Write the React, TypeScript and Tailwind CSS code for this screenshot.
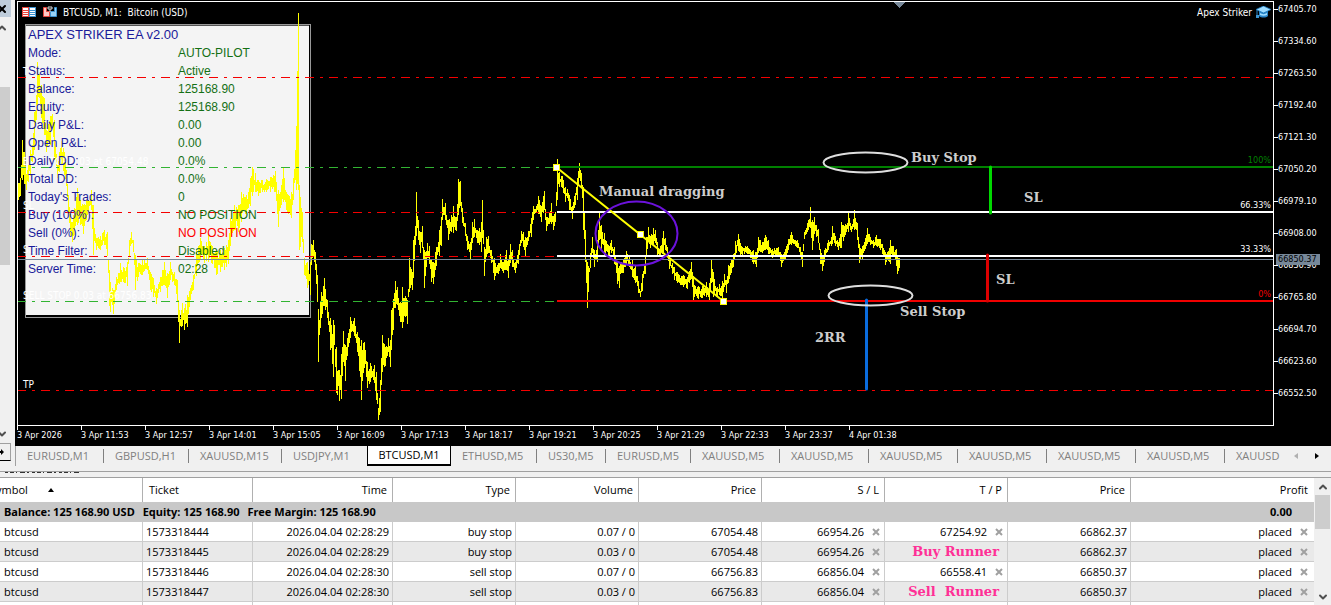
import React from 'react';
import { ChevronDown, ChevronUp, X } from 'lucide-react';

// [x, high, low] in plot coordinates
const priceRange: [number, number, number][] = [
  [18, 183, 200], [20, 178, 196], [22, 140, 180], [24, 152, 184], [26, 174, 190], [28, 165, 182], [30, 150, 176],
  [32, 145, 162], [34, 112, 150], [36, 95, 120], [37, 62, 105], [39, 74, 98], [41, 85, 118], [44, 98, 135],
  [46, 130, 152], [50, 116, 145], [52, 114, 125], [54, 120, 160], [57, 165, 178], [59, 152, 172], [61, 141, 165],
  [64, 152, 175], [66, 170, 186], [68, 195, 214], [70, 214, 236], [72, 222, 242], [74, 208, 235], [77, 188, 225],
  [80, 200, 225], [83, 205, 234], [86, 200, 220], [91, 190, 210], [93, 205, 255], [96, 238, 250], [100, 236, 250],
  [104, 230, 245], [107, 232, 256], [109, 270, 306], [110, 282, 312], [113, 290, 314], [116, 277, 290],
  [120, 263, 282], [124, 268, 283], [127, 262, 286], [129, 240, 256], [131, 232, 244], [133, 240, 252],
  [135, 255, 290], [138, 263, 277], [142, 260, 275], [147, 258, 270], [150, 272, 290], [153, 278, 297],
  [156, 288, 304], [160, 277, 292], [164, 262, 285], [167, 273, 298], [170, 262, 280], [174, 272, 285],
  [177, 280, 302], [178, 300, 322], [179, 310, 343], [182, 303, 326], [184, 308, 330], [187, 295, 327],
  [190, 288, 300], [193, 275, 290], [196, 250, 276], [200, 238, 260], [204, 246, 263], [208, 234, 262],
  [212, 246, 264], [216, 250, 275], [220, 250, 272], [224, 248, 270], [228, 240, 264], [230, 218, 246],
  [234, 205, 230], [238, 205, 232], [241, 192, 222], [246, 195, 215], [250, 178, 206], [252, 167, 196],
  [255, 173, 192], [258, 180, 196], [262, 180, 192], [266, 179, 192], [270, 177, 192], [275, 171, 192],
  [278, 190, 227], [280, 192, 208], [283, 167, 202], [287, 194, 213], [291, 192, 218], [293, 178, 200],
  [296, 126, 190], [298, 13, 190], [299, 185, 250], [302, 212, 242], [304, 258, 275], [307, 262, 288],
  [310, 262, 295], [311, 244, 265], [313, 240, 256], [315, 252, 270], [317, 275, 302], [318, 309, 362],
  [320, 302, 328], [321, 292, 318], [324, 278, 306], [327, 300, 318], [330, 318, 350], [333, 320, 377],
  [334, 325, 345], [336, 347, 393], [339, 370, 401], [341, 354, 399], [343, 331, 362], [345, 345, 381],
  [347, 338, 356], [350, 317, 338], [354, 318, 336], [357, 332, 352], [359, 338, 371], [361, 340, 400],
  [364, 342, 368], [367, 362, 388], [370, 363, 382], [374, 365, 383], [376, 372, 400], [378, 408, 420],
  [380, 380, 412], [382, 335, 372], [385, 347, 366], [388, 338, 352], [390, 340, 367], [391, 310, 350],
  [393, 299, 330], [395, 281, 308], [397, 287, 305], [400, 302, 322], [402, 287, 328], [405, 296, 317],
  [407, 300, 324], [409, 258, 292], [412, 272, 290], [413, 240, 278], [415, 226, 245], [416, 192, 236],
  [418, 220, 240], [420, 232, 253], [422, 226, 248], [424, 250, 288], [427, 243, 258], [429, 246, 264],
  [431, 260, 282], [433, 262, 284], [436, 247, 266], [439, 230, 256], [441, 217, 246], [442, 199, 220],
  [445, 203, 220], [448, 220, 240], [451, 215, 232], [453, 206, 233], [456, 217, 231], [458, 179, 215],
  [460, 181, 206], [462, 208, 223], [465, 223, 236], [467, 236, 250], [470, 242, 259], [472, 222, 243],
  [474, 219, 237], [477, 230, 243], [479, 228, 245], [481, 222, 252], [482, 200, 238], [484, 247, 276],
  [486, 237, 257], [488, 236, 253], [491, 250, 263], [494, 258, 280], [498, 263, 274], [500, 254, 268],
  [503, 262, 273], [506, 250, 270], [508, 260, 278], [510, 244, 263], [512, 250, 267], [515, 262, 273],
  [518, 250, 264], [521, 231, 243], [523, 232, 247], [525, 237, 256], [528, 231, 241], [531, 218, 237],
  [533, 206, 220], [536, 206, 212], [538, 196, 214], [541, 206, 222], [544, 191, 210], [546, 217, 231],
  [549, 212, 224], [551, 203, 224], [553, 216, 230], [555, 212, 222], [557, 159, 200], [559, 172, 187],
  [562, 176, 188], [565, 187, 202], [567, 189, 198], [569, 195, 210], [572, 206, 219], [574, 196, 208],
  [577, 178, 200], [579, 163, 178], [581, 173, 187], [583, 187, 230], [585, 230, 262], [587, 262, 308],
  [588, 266, 292], [590, 253, 268], [592, 237, 253], [594, 250, 267], [597, 240, 262], [599, 212, 240],
  [601, 225, 250], [604, 233, 256], [608, 245, 257], [611, 240, 253], [614, 247, 264], [617, 262, 284],
  [619, 266, 288], [621, 262, 273], [623, 259, 273], [626, 251, 264], [629, 257, 267], [632, 260, 277],
  [635, 266, 283], [638, 281, 293], [640, 291, 297], [642, 274, 291], [645, 256, 274], [646, 237, 257],
  [648, 227, 242], [650, 236, 248], [653, 228, 244], [655, 230, 243], [657, 242, 255], [660, 246, 257],
  [663, 231, 253], [665, 238, 250], [667, 247, 257], [669, 256, 269], [672, 263, 274], [674, 267, 280],
  [677, 272, 283], [683, 275, 287], [687, 277, 289], [691, 262, 279], [693, 276, 300], [698, 286, 299],
  [702, 286, 298], [706, 282, 297], [709, 283, 300], [711, 260, 283], [713, 272, 297], [716, 288, 297],
  [719, 284, 295], [722, 281, 301], [724, 274, 287], [726, 280, 293], [728, 265, 283], [731, 259, 273],
  [733, 254, 267], [735, 241, 257], [738, 234, 251], [740, 243, 256], [747, 246, 254], [753, 250, 264],
  [756, 252, 267], [758, 237, 253], [762, 242, 253], [765, 235, 250], [768, 240, 254], [772, 249, 258],
  [778, 247, 257], [781, 254, 267], [785, 249, 260], [788, 239, 250], [791, 232, 245], [797, 240, 248],
  [800, 247, 256], [802, 252, 267], [804, 232, 239], [807, 223, 232], [810, 207, 228], [812, 220, 250],
  [814, 217, 234], [818, 229, 243], [820, 249, 264], [822, 256, 271], [824, 250, 262], [828, 240, 250],
  [831, 237, 246], [832, 226, 244], [835, 236, 246], [838, 242, 250], [841, 222, 248], [845, 224, 235],
  [848, 213, 232], [851, 226, 232], [854, 210, 230], [857, 223, 240], [859, 244, 263], [862, 246, 259],
  [865, 238, 249], [867, 228, 244], [870, 237, 245], [873, 240, 248], [876, 235, 246], [880, 239, 250],
  [882, 244, 254], [885, 252, 265], [888, 251, 261], [890, 240, 264], [893, 246, 256], [896, 249, 266],
  [897, 257, 274], [900, 258, 270],
];

function noise(n: number) {
  const v = Math.sin(n * 12.9898) * 43758.5453;
  return v - Math.floor(v);
}

function buildBars() {
  let d = '';
  for (let i = 0; i < priceRange.length - 1; i++) {
    const [x0, h0, l0] = priceRange[i];
    const [x1, h1, l1] = priceRange[i + 1];
    for (let x = x0; x < x1; x++) {
      const t = (x - x0) / (x1 - x0);
      const high = h0 + (h1 - h0) * t;
      const low = l0 + (l1 - l0) * t;
      const cut = x === x0 ? 0 : (low - high) * 0.4;
      const top = Math.round(high + cut * noise(x));
      const bottom = Math.round(low - cut * noise(x + 500));
      d += `M${x + 0.5} ${top}V${bottom}`;
    }
  }
  return d;
}

const bars = buildBars();

const panelRows = [
  { label: 'Mode:', value: 'AUTO-PILOT' },
  { label: 'Status:', value: 'Active' },
  { label: 'Balance:', value: '125168.90' },
  { label: 'Equity:', value: '125168.90' },
  { label: 'Daily P&L:', value: '0.00' },
  { label: 'Open P&L:', value: '0.00' },
  { label: 'Daily DD:', value: '0.0%' },
  { label: 'Total DD:', value: '0.0%' },
  { label: "Today's Trades:", value: '0' },
  { label: 'Buy (100%):', value: 'NO POSITION' },
  { label: 'Sell (0%):', value: 'NO POSITION', alert: true },
  { label: 'Time Filter:', value: 'Disabled' },
  { label: 'Server Time:', value: '02:28' },
];

const prices = [
  '67405.70', '67334.60', '67263.50', '67192.40', '67121.30', '67050.20', '66979.10',
  '66908.00', '66836.90', '66765.80', '66694.70', '66623.60', '66552.50',
];

const times = [
  '3 Apr 2026', '3 Apr 11:53', '3 Apr 12:57', '3 Apr 14:01', '3 Apr 15:05', '3 Apr 16:09', '3 Apr 17:13',
  '3 Apr 18:17', '3 Apr 19:21', '3 Apr 20:25', '3 Apr 21:29', '3 Apr 22:33', '3 Apr 23:37', '4 Apr 01:38',
];

const orderLabels = [
  { text: 'TP', place: 'top-[62px]' },
  { text: 'BUY STOP 0.03 at 67054.48', place: 'top-[152px]' },
  { text: 'SL', place: 'top-[196px]' },
  { text: 'SL', place: 'top-[240px]' },
  { text: 'SELL STOP 0.03 at 66756.83', place: 'top-[286px]' },
  { text: 'TP', place: 'top-[375px]' },
];

const levelLabels = [
  { text: '100%', place: 'top-[150px] text-[#008000]' },
  { text: '66.33%', place: 'top-[195px] text-white' },
  { text: '33.33%', place: 'top-[239px] text-white' },
  { text: '0%', place: 'top-[284px] text-[#f00000]' },
];

const notes = [
  { text: 'Manual dragging', place: 'left-[581px] top-[180px]' },
  { text: 'Buy Stop', place: 'left-[893px] top-[146px]' },
  { text: 'SL', place: 'left-[1006px] top-[186px]' },
  { text: 'SL', place: 'left-[978px] top-[268px]' },
  { text: 'Sell Stop', place: 'left-[882px] top-[300px]' },
  { text: '2RR', place: 'left-[797px] top-[326px]' },
];

const tabs = [
  { name: 'EURUSD,M1', width: 'w-[88px]' },
  { name: 'GBPUSD,H1', width: 'w-[85px]' },
  { name: 'XAUUSD,M15', width: 'w-[93px]' },
  { name: 'USDJPY,M1', width: 'w-[85px]' },
  { name: 'BTCUSD,M1', width: 'w-[84px]', active: true },
  { name: 'ETHUSD,M5', width: 'w-[86px]' },
  { name: 'US30,M5', width: 'w-[69px]' },
  { name: 'EURUSD,M5', width: 'w-[85px]' },
  { name: 'XAUUSD,M5', width: 'w-[89px]' },
  { name: 'XAUUSD,M5', width: 'w-[89px]' },
  { name: 'XAUUSD,M5', width: 'w-[89px]' },
  { name: 'XAUUSD,M5', width: 'w-[89px]' },
  { name: 'XAUUSD,M5', width: 'w-[89px]' },
  { name: 'XAUUSD,M5', width: 'w-[89px]' },
  { name: 'XAUUSD', width: 'w-[60px]' },
];

const orders = [
  { ticket: '1573318444', time: '2026.04.04 02:28:29', type: 'buy stop', volume: '0.07 / 0', open: '67054.48', sl: '66954.26', tp: '67254.92', price: '66862.37' },
  { ticket: '1573318445', time: '2026.04.04 02:28:29', type: 'buy stop', volume: '0.03 / 0', open: '67054.48', sl: '66954.26', note: 'Buy Runner', price: '66862.37' },
  { ticket: '1573318446', time: '2026.04.04 02:28:30', type: 'sell stop', volume: '0.07 / 0', open: '66756.83', sl: '66856.04', tp: '66558.41', price: '66850.37' },
  { ticket: '1573318447', time: '2026.04.04 02:28:30', type: 'sell stop', volume: '0.03 / 0', open: '66756.83', sl: '66856.04', note: 'Sell  Runner', price: '66850.37' },
];

const headings = ['Time', 'Type', 'Volume', 'Price', 'S / L', 'T / P', 'Price'];

function SideStrip() {
  return (
    <div className="w-[15px] h-[461px] -mb-[15px] shrink-0 bg-[#f0f0f0] flex flex-col text-[#505050]">
      <button aria-label="Close" className="w-[11px] h-[17px] bg-[#bfcddb] flex items-center text-black overflow-hidden">
        <X className="-ml-1 w-3 h-3 shrink-0" strokeWidth={4} />
      </button>
      <button aria-label="Scroll up" className="w-[10px] h-[22px] flex items-center overflow-hidden">
        <ChevronUp className="-ml-1 w-3 h-3 shrink-0" strokeWidth={4} />
      </button>
      <div className="w-[10px] flex-1 pt-12">
        <div className="h-[178px] bg-[#cdcdcd]" />
      </div>
      <button aria-label="Scroll down" className="w-[10px] h-[18px] flex items-center overflow-hidden">
        <ChevronDown className="-ml-1 w-3 h-3 shrink-0" strokeWidth={4} />
      </button>
      <button aria-label="Next" className="w-[11px] h-[18px] border-t border-r border-b border-t-[#a0a0a0] border-r-[#a0a0a0] border-b-black flex items-center">
        <svg width="4" height="6" viewBox="0 0 4 6"><path d="M0 2h1V0l3 3-3 3V4H0z" fill="#000" /></svg>
      </button>
    </div>
  );
}

function ChartTitle() {
  return (
    <div className="absolute left-1 right-0.5 top-0.5 h-4 flex items-center text-[10px] text-white">
      <svg width="36" height="12" viewBox="0 0 36 12" className="mr-[5px]">
        <path d="M0 1h7v10H0z" fill="#e8443c" />
        <path d="M7 1h7v10H7z" fill="#3d94d1" />
        <path d="M1 2h5v2H1zM1 5h5v1H1zM1 7h5v1H1zM1 9h5v1H1zM8 2h5v2H8zM8 5h5v1H8zM8 7h5v1H8zM8 9h5v1H8z" fill="#fff" />
        <path d="M21.500 1.500h3v4h3v5h-6z" fill="#ffc9c4" stroke="#e8443c" />
        <path d="M34.500 1.500h-2v4h-4v5h6z" fill="#9ad2f5" stroke="#3d94d1" />
        <path d="M26 1h4v2h-4z" stroke="#ddd" fill="none" />
        <path d="M28 3v3" stroke="#ddd" />
      </svg>
      <span>BTCUSD, M1:&nbsp; Bitcoin (USD)</span>
      <span className="ml-auto mr-1">Apex Striker</span>
      <svg width="15" height="12" viewBox="0 0 15 12">
        <path d="M3 5v5c2 2 7 2 9 0V5z" fill="#2b86c9" />
        <path d="M7.500 0 15 3.500 7.500 7 0 3.500z" fill="#9edcff" stroke="#1b78bd" strokeWidth=".8" />
        <path d="M4 7c2 1.500 5 1.500 7 0v2c-2 1-5 1-7 0z" fill="#9edcff" />
        <path d="M1 4v6" stroke="#2b86c9" />
        <path d="M0 9h3v3H0z" fill="#3d94d1" />
      </svg>
    </div>
  );
}

function Plot() {
  const dash = '9 6 3 6';
  return (
    <div className="relative flex-1 min-w-0 h-[425px] mt-px border border-white overflow-hidden">
      <div className="absolute left-[7px] top-[22px] w-[286px] h-[294px] border border-[#999999] bg-black pr-px pb-0.5">
        <div className="h-full bg-[#f4f4f4] border-t border-[#555555]" />
      </div>

      <svg className="absolute inset-0 w-full h-full" viewBox="18 2 1255 423" preserveAspectRatio="none" fill="none">
        <path d={bars} stroke="#ffff00" shapeRendering="crispEdges" />
        <g shapeRendering="crispEdges">
          <path d="M17 77.500H1273M17 390.500H1273M17 212.500H556M17 256.500H556" stroke="#f40000" strokeDasharray={dash} />
          <path d="M17 167.500H556M17 301.500H556" stroke="#32b432" strokeDasharray={dash} />
          <path d="M17 259.500H1273" stroke="#778899" />
          <path d="M557 167H1273" stroke="#008000" strokeWidth="2" />
          <path d="M557 212H1273M557 256H1273" stroke="#ffffff" strokeWidth="2" />
          <path d="M557 301H1273" stroke="#f00000" strokeWidth="2" />
          <path d="M893 2h12l-6 6z" fill="#778899" />
        </g>
        <path d="M556 167 723 301" stroke="#ffff00" strokeWidth="2" />
        <g fill="#fff" stroke="#ffff00" strokeWidth="1">
          <rect x="553.500" y="164.500" width="6" height="6" />
          <rect x="637.500" y="231.500" width="6" height="6" />
          <rect x="720.500" y="298.500" width="6" height="6" />
        </g>
        <ellipse cx="636.500" cy="233.500" rx="41" ry="32" stroke="#6c12dc" strokeWidth="2" />
        <ellipse cx="865.500" cy="162.500" rx="42" ry="10" stroke="#dedede" strokeWidth="2" />
        <g strokeWidth="3" strokeLinecap="round">
          <path d="M990.500 167v46" stroke="#00d800" />
          <path d="M987.500 255v46" stroke="#dc0000" />
          <path d="M866.500 300v89" stroke="#0a6cde" />
        </g>
        <ellipse cx="870.500" cy="295.500" rx="42" ry="10" stroke="#dedede" strokeWidth="2" />
      </svg>

      {orderLabels.map((label, i) => (
        <span key={i} className={`absolute left-[5px] leading-4 text-[10px] text-white ${label.place}`}>{label.text}</span>
      ))}
      {levelLabels.map((label) => (
        <span key={label.text} className={`absolute right-0.5 h-4 leading-4 text-[9px] ${label.place}`}>{label.text}</span>
      ))}
      {notes.map((note, i) => (
        <span key={i} className={`absolute h-5 leading-5 text-[13px] font-black font-['DejaVu_Serif',serif] text-[#cdcdcd] whitespace-nowrap ${note.place}`}>
          {note.text}
        </span>
      ))}

      {/* EA panel */}
      <div className="absolute left-[10px] top-6 w-[280px] font-['Liberation_Sans',Arial,sans-serif] text-[12px] leading-[18px] text-[#1a1a9a]">
        <h2 className="text-[13px]">APEX STRIKER EA v2.00</h2>
        <dl>
          {panelRows.map((row) => (
            <div key={row.label} className="flex">
              <dt className="w-[150px]">{row.label}</dt>
              <dd className={row.alert ? 'text-[#ff0000]' : 'text-[#147014]'}>{row.value}</dd>
            </div>
          ))}
        </dl>
      </div>

      <ChartTitle />
    </div>
  );
}

function Chart() {
  return (
    <div className="flex-1 min-w-0 h-[446px] bg-black pl-0.5 font-['DejaVu_Sans_Condensed','DejaVu_Sans',sans-serif] text-[9px] text-white">
      <div className="flex">
        <Plot />
        <div className="relative w-[57px] shrink-0 pt-0.5 flex flex-col gap-[17px]">
          {prices.map((price) => (
            <div key={price} className="h-[15px] flex items-center">
              <span className="w-1 h-px bg-white" />
              <span>{price}</span>
            </div>
          ))}
          <span className="absolute left-0.5 top-[254px] w-11 h-[11px] pl-0.5 leading-[11px] bg-[#778899] text-black">66850.37</span>
        </div>
      </div>
      <div className="flex">
        {times.map((time) => (
          <div key={time} className="w-16 shrink-0">
            <div className="w-px h-1 bg-white" />
            <div className="leading-[10px] whitespace-nowrap">{time}</div>
          </div>
        ))}
      </div>
    </div>
  );
}

function ChartTabs() {
  return (
    <div className="flex h-[25px] pl-[15px] bg-[#f0f0f0] text-[11px]">
      <div className="flex flex-1 min-w-0 h-5 overflow-hidden border-l border-[#a0a0a0]">
        {tabs.map((tab, i) => (
          <button
            key={i}
            className={`relative h-5 shrink-0 whitespace-nowrap ${tab.width} ${
              tab.active
                ? 'bg-white border-x border-b-2 border-black text-black'
                : 'pl-[11px] text-left text-[#808080]'
            }`}
          >
            {tab.name}
            {!tab.active && i !== 3 && i < tabs.length - 1 && (
              <span className="absolute right-0 top-[3px] h-[14px] w-px bg-[#808080]" />
            )}
          </button>
        ))}
      </div>
      <button aria-label="Scroll tabs left" className="w-[21px] h-5 flex items-center justify-center">
        <svg width="4" height="6" viewBox="0 0 4 6"><path d="M4 0v6L0 3z" fill="#b0b0b0" /></svg>
      </button>
      <button aria-label="Scroll tabs right" className="w-[21px] h-5 mr-1 flex items-center justify-center">
        <svg width="4" height="6" viewBox="0 0 4 6"><path d="M0 0v6l4-3z" fill="#000" /></svg>
      </button>
    </div>
  );
}

function RemoveButton({ label }: { label: string }) {
  return (
    <button aria-label={label} className="ml-2 w-2 h-2 text-[#a0a0a0]">
      <svg width="8" height="8" viewBox="0 0 8 8"><path d="m1 1 6 6M7 1 1 7" stroke="currentColor" strokeWidth="2" /></svg>
    </button>
  );
}

function OrdersTable() {
  const cell = 'border-r border-b border-[#cccccc] p-0 pr-[3px] text-right';
  return (
    <table className="w-full table-fixed border-separate border-spacing-0 text-[11px] leading-4 text-black bg-white whitespace-nowrap">
      <colgroup>
        <col className="w-[143px]" />
        <col className="w-[110px]" />
        <col className="w-[140px]" />
        <col className="w-[123px]" />
        <col className="w-[123px]" />
        <col className="w-[123px]" />
        <col className="w-[123px]" />
        <col className="w-[123px]" />
        <col className="w-[123px]" />
        <col />
      </colgroup>
      <thead>
        <tr className="h-6">
          <th className="p-0 border-r border-[#b0b0b0] font-normal text-left">
            <div className="flex items-center overflow-hidden">
              <span className="-ml-1">ymbol</span>
              <svg width="6" height="4" viewBox="0 0 6 4" className="ml-5"><path d="M0 4h6L3 0z" fill="#000" /></svg>
            </div>
          </th>
          <th className="p-0 pl-[6px] border-r border-[#b0b0b0] font-normal text-left">Ticket</th>
          {headings.map((heading, i) => (
            <th key={i} className="p-0 pr-[5px] border-r border-[#b0b0b0] font-normal text-right">{heading}</th>
          ))}
          <th className="p-0 pr-[6px] font-normal text-right">Profit</th>
        </tr>
      </thead>
      <tbody>
        <tr className="h-5 bg-[#c8c8c8] font-bold font-['Noto_Sans',sans-serif]">
          <td colSpan={9} className="p-0 pl-1">
            <div className="flex gap-2">
              <span>Balance: 125 168.90 USD</span>
              <span>Equity: 125 168.90</span>
              <span>Free Margin: 125 168.90</span>
            </div>
          </td>
          <td className="p-0 pr-[22px] text-right">0.00</td>
        </tr>
        {orders.map((order) => (
          <tr key={order.ticket} className="h-5 even:bg-white odd:bg-[#e9e9e9]">
            <td className="border-r border-b border-[#cccccc] p-0 pl-1">btcusd</td>
            <td className="border-r border-b border-[#cccccc] p-0 pl-[3px]">{order.ticket}</td>
            <td className={cell}>{order.time}</td>
            <td className={cell}>{order.type}</td>
            <td className={cell}>{order.volume}</td>
            <td className={cell}>{order.open}</td>
            <td className={cell}>
              <div className="flex items-center justify-end pr-px">{order.sl}<RemoveButton label="Remove stop loss" /></div>
            </td>
            <td className={cell}>
              {order.note ? (
                <div className="pr-[5px] text-[13px] font-black whitespace-pre font-['DejaVu_Serif',serif] text-[#ff2f96]">{order.note}</div>
              ) : (
                <div className="flex items-center justify-end pr-px">{order.tp}<RemoveButton label="Remove take profit" /></div>
              )}
            </td>
            <td className={cell}>{order.price}</td>
            <td className="border-b border-[#cccccc] p-0 pr-[6px]">
              <div className="flex items-center justify-end">placed<RemoveButton label="Delete order" /></div>
            </td>
          </tr>
        ))}
        <tr className="h-[3px]">
          <td className="p-0 border-r border-[#cccccc]" />
          <td className="p-0 border-r border-[#cccccc]" />
          {headings.map((_, i) => (
            <td key={i} className="p-0 border-r border-[#cccccc]" />
          ))}
          <td className="p-0" />
        </tr>
      </tbody>
    </table>
  );
}

function Toolbox() {
  return (
    <div className="border-t border-[#a0a0a0] bg-[#f0f0f0]">
      <div className="h-[5px] pl-[5px]">
        <svg width="76" height="2" viewBox="0 0 76 2" className="block">
          <path d="M0 .5h76" stroke="#333" strokeDasharray="3 2 4 2 1 3 5 2 2 3" />
        </svg>
      </div>
      <div className="flex border-t border-[#a0a0a0]">
        <div className="flex-1 min-w-0">
          <OrdersTable />
        </div>
        <div className="w-[17px] flex flex-col items-center text-[#505050]">
          <button aria-label="Scroll up" className="h-[17px] flex items-center"><ChevronUp className="w-3 h-3" strokeWidth={4} /></button>
          <div className="w-[15px] h-[34px] bg-[#cdcdcd]" />
          <button aria-label="Scroll down" className="mt-auto h-[17px] flex items-center"><ChevronDown className="w-3 h-3" strokeWidth={4} /></button>
        </div>
      </div>
    </div>
  );
}

export default function App() {
  return (
    <div className="w-full min-h-screen bg-[#f0f0f0] font-['Open_Sans','Noto_Sans',sans-serif]">
      <div className="flex">
        <SideStrip />
        <Chart />
      </div>
      <ChartTabs />
      <Toolbox />
    </div>
  );
}
